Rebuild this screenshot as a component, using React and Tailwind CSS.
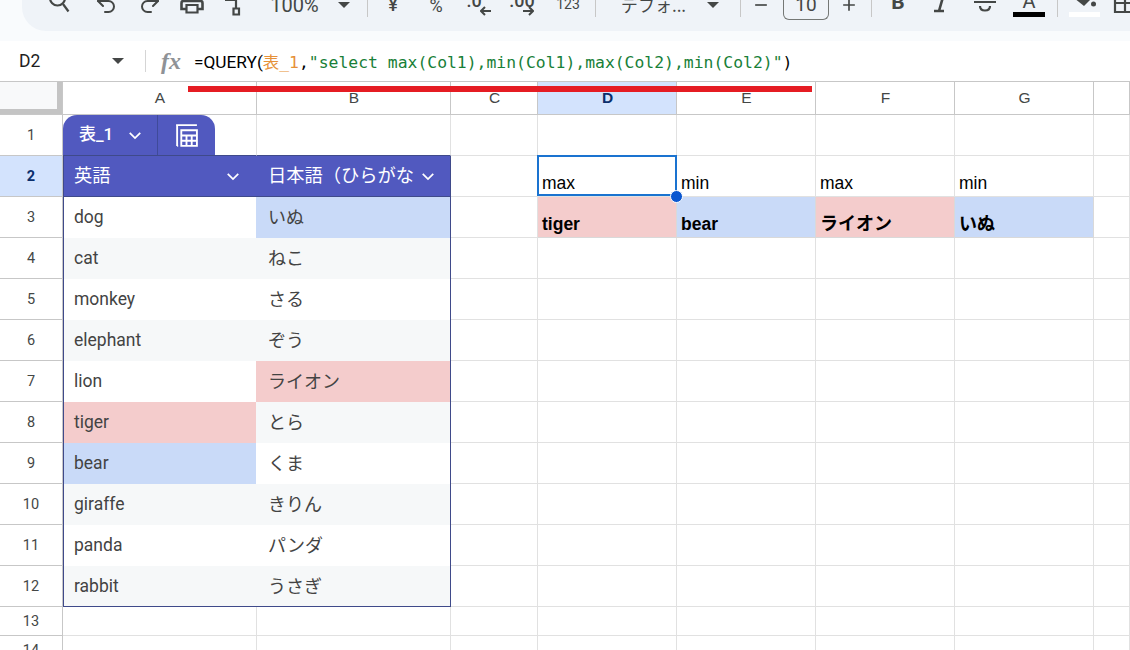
import { Undo2, Redo2 } from 'lucide-react';
import { MdRemove, MdAdd } from 'react-icons/md';

const columns = ['A', 'B', 'C', 'D', 'E', 'F', 'G', ''];
const animals = [
  ['dog', 'いぬ', '', 'bg-[#c9daf8]'],
  ['cat', 'ねこ'],
  ['monkey', 'さる'],
  ['elephant', 'ぞう'],
  ['lion', 'ライオン', '', 'bg-[#f4cccc]'],
  ['tiger', 'とら', 'bg-[#f4cccc]', ''],
  ['bear', 'くま', 'bg-[#c9daf8]', ''],
  ['giraffe', 'きりん'],
  ['panda', 'パンダ'],
  ['rabbit', 'うさぎ'],
];

const gridRow = 'grid grid-cols-[63px_194px_194px_87px_139px_139px_139px_139px_1fr]';
const cell = 'border-r border-b border-[#e1e1e1]';
const roboto = 'font-[Roboto,"Noto_Sans_CJK_JP",sans-serif]';
const arial = 'font-["Liberation_Sans","Noto_Sans_CJK_JP",sans-serif]';
const mono = 'font-["DejaVu_Sans_Mono","Noto_Sans_CJK_JP",monospace]';

function Slot({ className, children }) {
  return <div className={`h-[10px] flex items-center justify-center shrink-0 ${className}`}>{children}</div>;
}

function Sep({ className }) {
  return <div className={`w-px h-[17px] bg-[#c7c7c7] shrink-0 ${className}`} />;
}

function Caret() {
  return <div className="border-x-[6px] border-x-transparent border-t-[6px] border-t-[#444746]" />;
}

// toolbar glyphs are cut by the top of the picture, so they sit in a 30px box
function Glyph({ children, filled }) {
  return (
    <svg
      viewBox="0 0 30 30"
      className="w-[30px] h-[30px] shrink-0"
      fill={filled ? '#444746' : 'none'}
      stroke={filled ? 'none' : '#444746'}
      strokeWidth="2.2"
    >
      {children}
    </svg>
  );
}

function SmallArrow({ dir, className }) {
  return (
    <svg viewBox="0 0 11 10" className={`absolute top-[6px] w-[11px] h-[10px] ${className}`} fill="none" stroke="#444746" strokeWidth="2">
      {dir === 'left' ? <path d="M11 5H1M5 1L1 5l4 4" /> : <path d="M0 5h10M6 1l4 4-4 4" />}
    </svg>
  );
}

function Chevron({ className = '' }) {
  return (
    <svg viewBox="0 0 16 10" className={`w-[14px] h-[9px] shrink-0 ${className}`} fill="none" stroke="white" strokeWidth="2">
      <path d="M2 2l6 6 6-6" />
    </svg>
  );
}

function Toolbar() {
  return (
    <div className="h-[41px] bg-[#f9fbfd]">
      <div className={`ml-[22px] h-[31px] bg-[#eff3f8] rounded-bl-[24px] overflow-hidden flex items-start pl-[17px] text-[#444746] text-[18px] ${roboto}`}>
        <Slot className="w-[40px]">
          <Glyph>
            <circle cx="13.5" cy="8" r="7.5" />
            <path d="M19 14l5.5 7.5" />
          </Glyph>
        </Slot>
        <Slot className="w-[40px] ml-[7px]"><Undo2 size={24} strokeWidth={2} className="-translate-y-px" /></Slot>
        <Slot className="w-[40px] ml-[4px]"><Redo2 size={24} strokeWidth={2} className="-translate-y-px" /></Slot>
        <Slot className="w-[40px] ml-[1px]">
          <Glyph>
            <path d="M10 19H5.500V13q0-2 2-2h17q2 0 2 2v6H22" strokeWidth="2.6" />
            <path d="M10.500 15h11v7.500h-11z" />
            <path d="M8 10h16" strokeWidth="3" />
          </Glyph>
        </Slot>
        <Slot className="w-[40px] ml-[3px]">
          <Glyph>
            <path d="M6 10h11v8M14.500 18.500h5.500v6h-5.500z" />
          </Glyph>
        </Slot>
        <Slot className="w-[49px] ml-[16px] text-[20px]">100%</Slot>
        <Slot className="w-[16px] ml-[17px]"><Caret /></Slot>
        <Sep className="ml-[15px]" />
        <Slot className="w-[30px] ml-[10px] font-medium -translate-y-[1px]">¥</Slot>
        <Slot className="w-[30px] ml-[13px]">%</Slot>
        <Slot className="w-[36px] ml-[7px] relative">
          <span className="-translate-y-[5px] -translate-x-[2px] font-medium">.0</span>
          <SmallArrow dir="left" className="left-[22px]" />
        </Slot>
        <Slot className="w-[40px] ml-[8px] relative">
          <span className="-translate-y-[5px] font-medium">.00</span>
          <SmallArrow dir="right" className="left-[21px]" />
        </Slot>
        <Slot className="w-[22px] ml-[15px] text-[14px] -translate-y-px">123</Slot>
        <Sep className="ml-[16px]" />
        <Slot className="w-[69px] ml-[23px] font-['Noto_Sans_CJK_JP',sans-serif] text-[17px] whitespace-nowrap">デフォ...</Slot>
        <Slot className="w-[16px] ml-[17px]"><Caret /></Slot>
        <Sep className="ml-[19px]" />
        <Slot className="w-[20px] ml-[10px]"><MdRemove size={24} /></Slot>
        <div className="w-[46px] h-[20px] ml-[12px] border-x border-b border-[#747775] rounded-b-[6px] flex items-start justify-center leading-[10px] shrink-0 text-[19px]">10</div>
        <Slot className="w-[20px] ml-[10px]"><MdAdd size={26} /></Slot>
        <Sep className="ml-[12px]" />
        <Slot className="w-[30px] ml-[11px] font-bold text-[21px] -translate-y-[2px]">B</Slot>
        <Slot className="w-[30px] ml-[12px]">
          <Glyph>
            <path d="M9 21h10M14 21l6-21" strokeWidth="2.6" />
          </Glyph>
        </Slot>
        <Slot className="w-[30px] ml-[15px]">
          <Glyph>
            <path d="M4 12h22M10 16c0 3 2 4.500 5 4.500s5-1.500 5-4.500" />
          </Glyph>
        </Slot>
        <Slot className="w-[32px] ml-[13px] relative">
          <span className="text-[20px] -translate-y-[4px]">A</span>
          <div className="absolute left-0 top-[12px] w-[32px] h-[5px] bg-black" />
        </Slot>
        <Sep className="ml-[12px]" />
        <Slot className="w-[31px] ml-[11px] relative">
          <Glyph filled>
            <path d="M4 8l10 8 8-8z" />
            <circle cx="23.500" cy="14" r="2.500" />
          </Glyph>
          <div className="absolute left-0 top-[12px] w-[31px] h-[5px] bg-white" />
        </Slot>
        <Slot className="w-[26px] ml-[7px]">
          <Glyph>
            <path d="M10 0v22h22M10 13h22M20 0v22" />
          </Glyph>
        </Slot>
      </div>
    </div>
  );
}

function FormulaBar() {
  return (
    <div className="h-[41px] bg-white border-b border-[#c7c7c7] flex items-center relative">
      <div className={`w-[145px] pl-[19px] pr-[21px] flex items-center justify-between text-[17.5px] text-[#1f1f1f] ${roboto}`}>
        D2
        <Caret />
      </div>
      <div className="w-px h-[22px] bg-[#d5d5d5]" />
      <div className="w-[48px] pl-[15px] font-['Liberation_Serif',serif] italic font-bold text-[24px] leading-none text-[#8f9296]">fx</div>
      <div className="flex items-baseline text-[16.4px] whitespace-nowrap text-black translate-y-[2px]">
        <span className={`text-[17.25px] ${roboto}`}>=QUERY(</span>
        <span className={`text-[#e69138] ${mono}`}>表_1</span>
        <span className={mono}>,</span>
        <span className={`text-[#188038] ${mono}`}>"select max(Col1),min(Col1),max(Col2),min(Col2)"</span>
        <span className={mono}>)</span>
      </div>
      <div className="absolute left-[188px] top-[45px] w-[624px] h-[6px] bg-[#e51c23] z-20" />
    </div>
  );
}

function ColumnHeader() {
  return (
    <div className={`${gridRow} h-[33px] text-[15.5px] text-[#444746] ${arial}`}>
      <div className="bg-white border-r border-b border-[#c7c7c7] relative">
        <div className="absolute left-0 top-0 w-[62px] h-[32px] border-r-[5px] border-b-[5px] border-[#c4c4c4] bg-[#f8f9fa]" />
      </div>
      {columns.map((c) => (
        <div key={c} className={`flex items-center justify-center pl-px border-r border-b border-[#c7c7c7] ${c === 'D' ? 'bg-[#d3e3fd] font-bold text-[#0b2e6b]' : 'bg-white'}`}>
          {c}
        </div>
      ))}
    </div>
  );
}

function RowHead({ n, active, className = 'h-[41px]' }) {
  return (
    <div className={`${className} flex items-center justify-center pt-[2px] border-r border-b border-[#c7c7c7] text-[14.5px] ${roboto} ${active ? 'bg-[#d3e3fd] font-bold text-[#0b2e6b]' : 'bg-white text-[#444746]'}`}>
      {n}
    </div>
  );
}

function Empties({ from = 0 }) {
  return [...Array(6 - from)].map((_, i) => <div key={i} className={cell} />);
}

function ResultCell({ children, className = 'bg-white', bold }) {
  return (
    <div className={`relative flex items-end pl-[4px] text-[17.5px] text-black leading-[26px] ${arial} ${bold ? 'font-bold' : ''} ${className}`}>
      {children}
    </div>
  );
}

function Sheet() {
  return (
    <div className="text-[17.5px]">
      <div className={`${gridRow} h-[41px]`}>
        <RowHead n={1} />
        <div className="border-r border-b border-r-[#e1e1e1] border-b-[#3f4a8a] flex">
          <div className={`w-[152px] h-[40px] rounded-t-[14px] bg-[#5159bf] flex text-white ${roboto}`}>
            <div className="w-[95px] border-r border-[#3f4a9a] flex items-center pl-[16px] font-medium text-[17px]">
              表_1
              <Chevron className="ml-[15px]" />
            </div>
            <div className="flex-1 flex items-center justify-center">
              <svg viewBox="0 0 24 24" className="w-[25px] h-[25px]" fill="none" stroke="white" strokeWidth="1.8">
                <path d="M2 2h20M3 2v20M3 22h1M7 7h15v15H7zM7 12h15M7 17h15M12 12v10M17 12v10" />
              </svg>
            </div>
          </div>
        </div>
        <div className="border-r border-b border-r-[#e1e1e1] border-b-[#3f4a8a]" />
        <Empties />
      </div>

      <div className={`${gridRow} h-[41px]`}>
        <RowHead n={2} active />
        <div className={`bg-[#5159bf] border-b border-l border-[#3f4a8a] flex items-center justify-between pl-[10px] pr-[17px] text-white text-[18.25px] ${roboto}`}>
          英語
          <Chevron />
        </div>
        <div className={`bg-[#5159bf] border-b border-r border-[#3f4a8a] -ml-px flex items-center justify-between pl-[12px] pr-[15px] text-white text-[18.25px] whitespace-nowrap ${roboto}`}>
          日本語（ひらがな
          <Chevron />
        </div>
        <div className={cell} />
        <div className={`${cell} relative`}>
          <ResultCell className="h-full">max</ResultCell>
          <div className="absolute -left-px -top-px w-[140px] h-[41px] border-2 border-[#1a73d0]" />
          <div className="absolute left-[132px] top-[34px] w-[13px] h-[13px] rounded-full bg-[#0b57d0] border border-white z-10" />
        </div>
        <div className={cell}><ResultCell className="h-full">min</ResultCell></div>
        <div className={cell}><ResultCell className="h-full">max</ResultCell></div>
        <div className={cell}><ResultCell className="h-full">min</ResultCell></div>
        <div className={cell} />
      </div>

      {animals.map(([en, ja, enBg, jaBg], i) => {
        const stripe = i % 2 === 1 ? 'bg-[#f6f8f9]' : 'bg-white';
        const last = i === animals.length - 1;
        return (
          <div key={en} className={`${gridRow} h-[41px]`}>
            <RowHead n={i + 3} />
            <div className={`${enBg || stripe} border-l border-[#3f4a8a] ${last ? 'border-b' : ''} flex items-center pl-[10px] text-[#434343] ${roboto}`}>{en}</div>
            <div className={`${jaBg || stripe} border-r border-[#3f4a8a] ${last ? 'border-b' : ''} -ml-px flex items-center pl-[12px] text-[18px] text-[#434343] ${roboto}`}>{ja}</div>
            <div className={cell} />
            {i === 0 ? (
              <>
                <ResultCell bold className="bg-[#f4cccc] border-r border-b border-[#d9d9d9]">tiger</ResultCell>
                <ResultCell bold className="bg-[#c9daf8] border-r border-b border-[#d9d9d9]">bear</ResultCell>
                <ResultCell bold className="bg-[#f4cccc] border-r border-b border-[#d9d9d9] text-[18px]">ライオン</ResultCell>
                <ResultCell bold className="bg-[#c9daf8] border-r border-b border-[#d9d9d9] text-[18px]">いぬ</ResultCell>
                <div className={cell} />
              </>
            ) : (
              <Empties from={1} />
            )}
          </div>
        );
      })}

      {[13, 14].map((n) => (
        <div key={n} className={`${gridRow} h-[29px]`}>
          <RowHead n={n} className="h-[29px]" />
          <div className={cell} />
          <div className={cell} />
          <div className={cell} />
          <Empties from={1} />
        </div>
      ))}
    </div>
  );
}

export default function App() {
  return (
    <div className="w-[1130px] h-[650px] overflow-hidden bg-white">
      <Toolbar />
      <FormulaBar />
      <ColumnHeader />
      <Sheet />
    </div>
  );
}
